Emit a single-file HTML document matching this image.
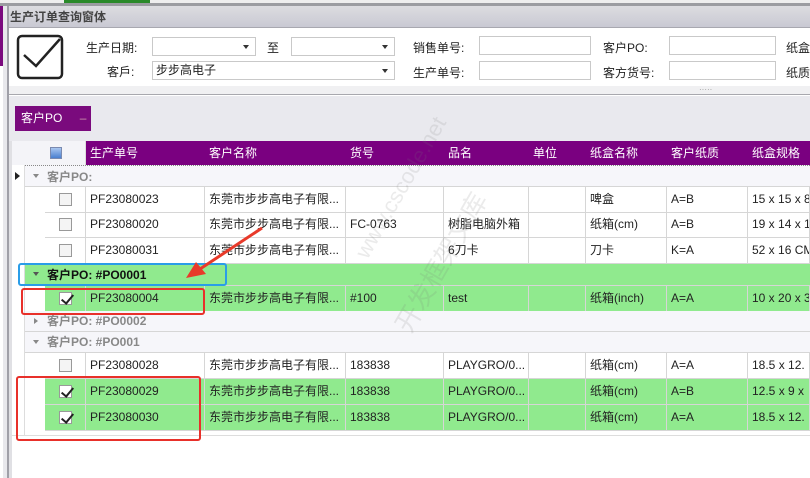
<!DOCTYPE html>
<html><head><meta charset="utf-8"><style>
*{margin:0;padding:0;box-sizing:border-box}
body{width:810px;height:478px;overflow:hidden;position:relative;background:#fff;font-family:"Liberation Sans","Noto Sans CJK SC",sans-serif;font-size:12px;color:#222}
.a{position:absolute}
.lbl{position:absolute;font-size:12px;color:#222;white-space:nowrap}
.inp{position:absolute;background:#fff;border:1px solid #c9c9c9;height:19px}
.dd:after{content:"";position:absolute;right:6px;top:7px;border-left:3px solid transparent;border-right:3px solid transparent;border-top:4px solid #333}
.hd{position:absolute;top:141px;height:24px;color:#fff;font-size:12px;line-height:24px;padding-left:4px}
.row{position:absolute;left:45px;width:765px;height:26px;border-bottom:1px solid #d6d6d6}
.c{position:absolute;top:0;height:25px;line-height:25px;padding-left:4px;border-right:1px solid #d6d6d6;white-space:nowrap;overflow:hidden;font-size:12px}
.g{background:#90ea8e}
.cb{position:absolute;left:14px;top:6px;width:13px;height:13px;border:1px solid #999;background:#f4f4f4}
.ck{background:#fff}
.ck:after{content:"";position:absolute;left:4px;top:-1px;width:5px;height:10px;border-right:2px solid #222;border-bottom:2px solid #222;transform:rotate(40deg)}
.grp{position:absolute;left:25px;width:785px;border-bottom:1px solid #d6d6d6;font-weight:bold;color:#888;font-size:12px;padding-left:22px;white-space:nowrap}
.tri{position:absolute;left:8px;top:8px;border-left:3px solid transparent;border-right:3px solid transparent;border-top:4px solid #888}
.trr{position:absolute;left:9px;top:7px;border-top:3px solid transparent;border-bottom:3px solid transparent;border-left:4px solid #888}
</style></head><body>
<div class="a" style="left:0;top:0;width:810px;height:3px;background:#eee"></div>
<div class="a" style="left:64px;top:0;width:86px;height:3px;background:#2a8a2a"></div>
<div class="a" style="left:0;top:3px;width:810px;height:3px;background:#9b9ca1"></div>
<div class="a" style="left:0;top:6px;width:3px;height:60px;background:#7b0a7e"></div>
<div class="a" style="left:3px;top:6px;width:5px;height:472px;background:#e8e8ec"></div>
<div class="a" style="left:7px;top:6px;width:2px;height:472px;background:#a0a0a8"></div>
<div class="a" style="left:9px;top:6px;width:801px;height:22px;background:linear-gradient(#dcdce0,#c9c9d3);border-bottom:1px solid #a8a8b0"></div>
<div class="lbl" style="left:10px;top:8px;font-weight:bold;color:#444;font-size:12px">生产订单查询窗体</div>
<div class="a" style="left:9px;top:28px;width:801px;height:58px;background:#fff"></div>
<div class="a" style="left:9px;top:86px;width:801px;height:9px;background:#f0f0f2;border-bottom:1px solid #a8a8ae"></div>
<div class="lbl" style="left:699px;top:85px;color:#999;font-size:8px">·····</div>
<svg class="a" style="left:16px;top:33px" width="48" height="48" viewBox="0 0 48 48"><rect x="2" y="3" width="44" height="42" rx="4" fill="none" stroke="#222" stroke-width="2.5"/><path d="M8 22 L20 33 L44 6" fill="none" stroke="#222" stroke-width="2.5"/></svg>
<div class="lbl" style="left:86px;top:39px">生产日期:</div>
<div class="inp dd" style="left:152px;top:37px;width:104px"></div>
<div class="lbl" style="left:267px;top:39px">至</div>
<div class="inp dd" style="left:291px;top:37px;width:104px"></div>
<div class="lbl" style="left:107px;top:63px">客戶:</div>
<div class="inp dd" style="left:152px;top:61px;width:243px;padding-left:3px;line-height:17px">步步高电子</div>
<div class="lbl" style="left:413px;top:39px">销售单号:</div>
<div class="inp" style="left:479px;top:36px;width:112px"></div>
<div class="lbl" style="left:603px;top:39px">客户PO:</div>
<div class="inp" style="left:669px;top:36px;width:107px"></div>
<div class="lbl" style="left:786px;top:39px">纸盒</div>
<div class="lbl" style="left:413px;top:64px">生产单号:</div>
<div class="inp" style="left:479px;top:61px;width:112px"></div>
<div class="lbl" style="left:603px;top:64px">客方货号:</div>
<div class="inp" style="left:669px;top:61px;width:107px"></div>
<div class="lbl" style="left:786px;top:64px">纸质</div>
<div class="a" style="left:9px;top:96px;width:801px;height:45px;background:#e9e9ee"></div>
<div class="a" style="left:15px;top:106px;width:76px;height:25px;background:#7a0a7d;color:#fff;line-height:25px;padding-left:6px">客户PO <span style="margin-left:14px;color:#c9a">–</span></div>
<div class="a" style="left:9px;top:141px;width:3px;height:337px;background:#e0e0e4"></div>
<div class="a" style="left:12px;top:141px;width:74px;height:24px;background:#f4f4f8;border-right:1px solid #ddd"></div>
<div class="a" style="left:50px;top:147px;width:12px;height:12px;border:1px solid #7a8ab0;background:linear-gradient(#a9c6f0,#4a7fd0)"></div>
<div class="a" style="left:86px;top:141px;width:724px;height:24px;background:#7a0080"></div>
<div class="hd" style="left:86px">生产单号</div><div class="hd" style="left:205px">客户名称</div><div class="hd" style="left:346px">货号</div><div class="hd" style="left:444px">品名</div><div class="hd" style="left:529px">单位</div><div class="hd" style="left:586px">纸盒名称</div><div class="hd" style="left:667px">客户纸质</div><div class="hd" style="left:748px">纸盒规格</div>
<div class="a" style="left:12px;top:165px;width:13px;height:270px;background:#fff;border-right:1px solid #ddd"></div>
<div class="a" style="left:15px;top:172px;border-top:4px solid transparent;border-bottom:4px solid transparent;border-left:5px solid #222"></div>
<div class="a" style="left:12px;top:435px;width:798px;height:1px;background:#ddd"></div>

<div class="grp" style="top:165px;height:22px;line-height:22px;background:#f6f6fa;border-top:1px dotted #888"><span class="tri"></span>客户PO:</div>
<div class="row" style="top:187px"><div class="c" style="left:0;width:41px;padding:0"><span class="cb"></span></div><div class="c" style="left:41px;width:119px">PF23080023</div><div class="c" style="left:160px;width:141px">东莞市步步高电子有限...</div><div class="c" style="left:301px;width:98px"></div><div class="c" style="left:399px;width:85px"></div><div class="c" style="left:484px;width:57px"></div><div class="c" style="left:541px;width:81px">啤盒</div><div class="c" style="left:622px;width:81px">A=B</div><div class="c" style="left:703px;width:62px">15 x 15 x 8</div></div>
<div class="row" style="top:212px"><div class="c" style="left:0;width:41px;padding:0"><span class="cb"></span></div><div class="c" style="left:41px;width:119px">PF23080020</div><div class="c" style="left:160px;width:141px">东莞市步步高电子有限...</div><div class="c" style="left:301px;width:98px">FC-0763</div><div class="c" style="left:399px;width:85px">树脂电脑外箱</div><div class="c" style="left:484px;width:57px"></div><div class="c" style="left:541px;width:81px">纸箱(cm)</div><div class="c" style="left:622px;width:81px">A=B</div><div class="c" style="left:703px;width:62px">19 x 14 x 1</div></div>
<div class="row" style="top:238px"><div class="c" style="left:0;width:41px;padding:0"><span class="cb"></span></div><div class="c" style="left:41px;width:119px">PF23080031</div><div class="c" style="left:160px;width:141px">东莞市步步高电子有限...</div><div class="c" style="left:301px;width:98px"></div><div class="c" style="left:399px;width:85px">6刀卡</div><div class="c" style="left:484px;width:57px"></div><div class="c" style="left:541px;width:81px">刀卡</div><div class="c" style="left:622px;width:81px">K=A</div><div class="c" style="left:703px;width:62px">52 x 16 CM</div></div>
<div class="grp g" style="top:264px;height:22px;line-height:22px;color:#111"><span class="tri" style="border-top-color:#555"></span>客户PO: #PO0001</div>
<div class="row g" style="top:286px"><div class="c" style="left:0;width:41px;padding:0"><span class="cb ck"></span></div><div class="c" style="left:41px;width:119px">PF23080004</div><div class="c" style="left:160px;width:141px">东莞市步步高电子有限...</div><div class="c" style="left:301px;width:98px">#100</div><div class="c" style="left:399px;width:85px"> test</div><div class="c" style="left:484px;width:57px"></div><div class="c" style="left:541px;width:81px">纸箱(inch)</div><div class="c" style="left:622px;width:81px">A=A</div><div class="c" style="left:703px;width:62px">10 x 20 x 3</div></div>
<div class="grp" style="top:311px;height:21px;line-height:21px;background:#f6f6fa"><span class="trr"></span>客户PO: #PO0002</div>
<div class="grp" style="top:332px;height:21px;line-height:21px;background:#f6f6fa"><span class="tri"></span>客户PO: #PO001</div>
<div class="row" style="top:353px"><div class="c" style="left:0;width:41px;padding:0"><span class="cb"></span></div><div class="c" style="left:41px;width:119px">PF23080028</div><div class="c" style="left:160px;width:141px">东莞市步步高电子有限...</div><div class="c" style="left:301px;width:98px">183838</div><div class="c" style="left:399px;width:85px">PLAYGRO/0...</div><div class="c" style="left:484px;width:57px"></div><div class="c" style="left:541px;width:81px">纸箱(cm)</div><div class="c" style="left:622px;width:81px">A=A</div><div class="c" style="left:703px;width:62px">18.5 x 12.</div></div>
<div class="row g" style="top:379px"><div class="c" style="left:0;width:41px;padding:0"><span class="cb ck"></span></div><div class="c" style="left:41px;width:119px">PF23080029</div><div class="c" style="left:160px;width:141px">东莞市步步高电子有限...</div><div class="c" style="left:301px;width:98px">183838</div><div class="c" style="left:399px;width:85px">PLAYGRO/0...</div><div class="c" style="left:484px;width:57px"></div><div class="c" style="left:541px;width:81px">纸箱(cm)</div><div class="c" style="left:622px;width:81px">A=B</div><div class="c" style="left:703px;width:62px">12.5 x 9 x</div></div>
<div class="row g" style="top:405px"><div class="c" style="left:0;width:41px;padding:0"><span class="cb ck"></span></div><div class="c" style="left:41px;width:119px">PF23080030</div><div class="c" style="left:160px;width:141px">东莞市步步高电子有限...</div><div class="c" style="left:301px;width:98px">183838</div><div class="c" style="left:399px;width:85px">PLAYGRO/0...</div><div class="c" style="left:484px;width:57px"></div><div class="c" style="left:541px;width:81px">纸箱(cm)</div><div class="c" style="left:622px;width:81px">A=A</div><div class="c" style="left:703px;width:62px">18.5 x 12.</div></div>

<div class="a" style="left:18px;top:263px;width:209px;height:23px;border:2px solid #2a9de8;border-radius:3px"></div>
<div class="a" style="left:21px;top:288px;width:184px;height:27px;border:2px solid #e8302a;border-radius:3px"></div>
<div class="a" style="left:16px;top:376px;width:185px;height:65px;border:2px solid #e8302a;border-radius:3px"></div>
<svg class="a" style="left:0;top:0" width="810" height="478"><path d="M262 228 L200 269" stroke="#e83a2a" stroke-width="3"/><path d="M186 278 L196 262 L206 274 Z" fill="#e83a2a"/></svg>
<div class="a" style="left:350px;top:250px;transform:rotate(-60deg);transform-origin:left top;color:rgba(120,120,120,.15);font-size:22px;white-space:nowrap">www.cscode.net</div>
<div class="a" style="left:385px;top:320px;transform:rotate(-60deg);transform-origin:left top;color:rgba(120,120,120,.15);font-size:26px;white-space:nowrap">开发框架文库</div>
</body></html>
